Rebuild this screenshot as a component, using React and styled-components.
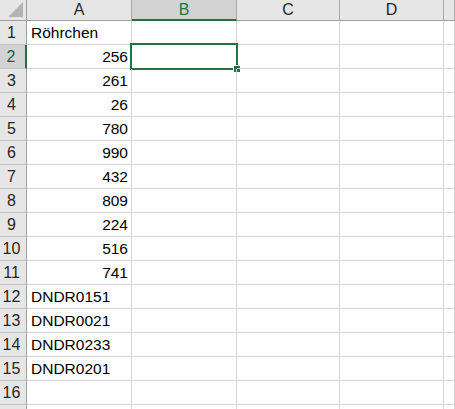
import React from "react";
import styled, { createGlobalStyle } from "styled-components";

const Global = createGlobalStyle`
  html, body {
    margin: 0;
    padding: 0;
    background: #fff;
    overflow: hidden;
  }
  body {
    font-family: "Liberation Sans", Arial, sans-serif;
  }
`;

const GREEN = "#217346";

const columns = ["A", "B", "C", "D", ""];
const selectedCol = "B";
const selectedRow = 2;
const visibleRows = 16;

const values = [
  { a: "Röhrchen", num: false },
  { a: "256", num: true },
  { a: "261", num: true },
  { a: "26", num: true },
  { a: "780", num: true },
  { a: "990", num: true },
  { a: "432", num: true },
  { a: "809", num: true },
  { a: "224", num: true },
  { a: "516", num: true },
  { a: "741", num: true },
  { a: "DNDR0151", num: false },
  { a: "DNDR0021", num: false },
  { a: "DNDR0233", num: false },
  { a: "DNDR0201", num: false },
  { a: "", num: false },
  { a: "", num: false },
];

const Sheet = styled.div`
  display: grid;
  grid-template-columns: 27px 105px 105px 103px 104px 1fr;
  grid-auto-rows: 24px;
  grid-template-rows: 21px;
  width: 455px;
  height: 409px;
  overflow: hidden;
  font-size: 15.5px;
  color: #000;
`;

const Corner = styled.div`
  position: relative;
  background: #e6e6e6;
  border-right: 1px solid #9e9e9e;
  border-bottom: 1px solid #9e9e9e;
  &::after {
    content: "";
    position: absolute;
    right: 3px;
    bottom: 3px;
    width: 0;
    height: 0;
    border-left: 15px solid transparent;
    border-bottom: 15px solid #b4b4b4;
  }
`;

const ColHead = styled.div`
  background: ${(p) => (p.$active ? "#d2d2d2" : "#e6e6e6")};
  border-right: 1px solid #ababab;
  border-bottom: ${(p) => (p.$active ? `2px solid ${GREEN}` : "1px solid #9e9e9e")};
  color: ${(p) => (p.$active ? GREEN : "#262626")};
  text-align: center;
  line-height: 20px;
  font-size: 16px;
`;

const RowHead = styled.div`
  background: ${(p) => (p.$active ? "#d2d2d2" : "#e6e6e6")};
  border-right: ${(p) => (p.$active ? `2px solid ${GREEN}` : "1px solid #9e9e9e")};
  border-bottom: 1px solid #c4c4c4;
  color: ${(p) => (p.$active ? "#1d5a38" : "#262626")};
  text-align: center;
  padding-right: 3px;
  line-height: 23px;
  font-size: 16px;
`;

const Cell = styled.div`
  position: relative;
  border-right: 1px solid #d4d4d4;
  border-bottom: 1px solid #d4d4d4;
  padding: 0 3px 0 4px;
  line-height: 23px;
  text-align: ${(p) => (p.$num ? "right" : "left")};
  white-space: nowrap;
`;

const Selection = styled.div`
  position: absolute;
  left: -2px;
  top: -2px;
  right: -2px;
  bottom: -2px;
  border: 2px solid ${GREEN};
  pointer-events: none;
  &::after {
    content: "";
    position: absolute;
    right: -5px;
    bottom: -5px;
    width: 6px;
    height: 6px;
    background: ${GREEN};
    border: 1px solid #fff;
  }
`;

export default function App() {
  return (
    <>
      <Global />
      <Sheet>
        <Corner />
        {columns.map((c, i) => (
          <ColHead key={i} $active={c === selectedCol}>
            {c}
          </ColHead>
        ))}
        {values.map((row, i) => {
          const n = i + 1;
          return (
            <React.Fragment key={n}>
              <RowHead $active={n === selectedRow}>
                {n <= visibleRows ? n : ""}
              </RowHead>
              <Cell $num={row.num}>{row.a}</Cell>
              {columns.slice(1).map((c, j) => (
                <Cell key={j}>
                  {n === selectedRow && c === selectedCol && <Selection />}
                </Cell>
              ))}
            </React.Fragment>
          );
        })}
      </Sheet>
    </>
  );
}
